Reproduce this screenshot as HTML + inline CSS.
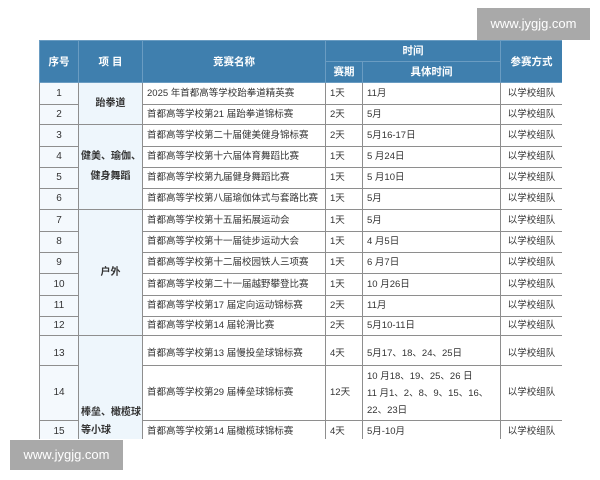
<!DOCTYPE html>
<html><head><meta charset="utf-8"><style>
body{margin:0;width:600px;height:480px;background:#fff;position:relative;overflow:hidden;font-family:"Liberation Sans","Noto Sans CJK SC",sans-serif;}
#w{position:absolute;left:39px;top:40px;width:523px;height:399px;overflow:hidden;}
table{border-collapse:collapse;table-layout:fixed;width:523px;font-size:9.5px;color:#333;}
td,th{border:1px solid #8e8e8e;padding:0 4px;white-space:nowrap;overflow:hidden;line-height:12px;}
th{background:#3f7fae;color:#fff;font-weight:bold;font-size:10.5px;border-color:#6a9cc2;text-align:center;}
td.n{text-align:center;background:#f4f9fd;font-size:10px;}
td.c{text-align:center;background:#eef6fc;font-weight:bold;font-size:10px;line-height:20px;padding:0 2px;}
td.t{text-align:center;}
.wm{position:absolute;background:#a9a9a9;color:#fff;font-size:13px;text-align:center;}
</style></head><body>
<div id="w"><table>
<colgroup><col style="width:39px"><col style="width:64px"><col style="width:183px"><col style="width:37px"><col style="width:138px"><col style="width:62px"></colgroup>
<tr style="height:21px"><th rowspan="2">序号</th><th rowspan="2">项 目</th><th rowspan="2">竞赛名称</th><th colspan="2">时间</th><th rowspan="2">参赛方式</th></tr>
<tr style="height:21px"><th>赛期</th><th>具体时间</th></tr>
<tr style="height:22px"><td class="n">1</td><td class="c" rowspan="2">跆拳道</td><td>2025 年首都高等学校跆拳道精英赛</td><td>1天</td><td>11月</td><td class="t">以学校组队</td></tr>
<tr style="height:20px"><td class="n">2</td><td>首都高等学校第21 届跆拳道锦标赛</td><td>2天</td><td>5月</td><td class="t">以学校组队</td></tr>
<tr style="height:22px"><td class="n">3</td><td class="c" rowspan="4">健美、瑜伽、<br>健身舞蹈</td><td>首都高等学校第二十届健美健身锦标赛</td><td>2天</td><td>5月16-17日</td><td class="t">以学校组队</td></tr>
<tr style="height:21px"><td class="n">4</td><td>首都高等学校第十六届体育舞蹈比赛</td><td>1天</td><td>5 月24日</td><td class="t">以学校组队</td></tr>
<tr style="height:21px"><td class="n">5</td><td>首都高等学校第九届健身舞蹈比赛</td><td>1天</td><td>5 月10日</td><td class="t">以学校组队</td></tr>
<tr style="height:21px"><td class="n">6</td><td>首都高等学校第八届瑜伽体式与套路比赛</td><td>1天</td><td>5月</td><td class="t">以学校组队</td></tr>
<tr style="height:22px"><td class="n">7</td><td class="c" rowspan="6">户外</td><td>首都高等学校第十五届拓展运动会</td><td>1天</td><td>5月</td><td class="t">以学校组队</td></tr>
<tr style="height:21px"><td class="n">8</td><td>首都高等学校第十一届徒步运动大会</td><td>1天</td><td>4 月5日</td><td class="t">以学校组队</td></tr>
<tr style="height:21px"><td class="n">9</td><td>首都高等学校第十二届校园铁人三项赛</td><td>1天</td><td>6 月7日</td><td class="t">以学校组队</td></tr>
<tr style="height:22px"><td class="n">10</td><td>首都高等学校第二十一届越野攀登比赛</td><td>1天</td><td>10 月26日</td><td class="t">以学校组队</td></tr>
<tr style="height:21px"><td class="n">11</td><td>首都高等学校第17 届定向运动锦标赛</td><td>2天</td><td>11月</td><td class="t">以学校组队</td></tr>
<tr style="height:19px"><td class="n">12</td><td>首都高等学校第14 届轮滑比赛</td><td>2天</td><td>5月10-11日</td><td class="t">以学校组队</td></tr>
<tr style="height:30px"><td class="n" style="padding-top:6px">13</td><td class="c" rowspan="3" style="text-align:left;vertical-align:top;padding-top:68px;line-height:18px">棒垒、橄榄球<br>等小球</td><td style="padding-top:6px">首都高等学校第13 届慢投垒球锦标赛</td><td style="padding-top:6px">4天</td><td style="padding-top:6px">5月17、18、24、25日</td><td class="t" style="padding-top:6px">以学校组队</td></tr>
<tr style="height:55px"><td class="n">14</td><td>首都高等学校第29 届棒垒球锦标赛</td><td>12天</td><td style="line-height:17px">10 月18、19、25、26 日<br>11 月1、2、8、9、15、16、<br>22、23日</td><td class="t">以学校组队</td></tr>
<tr style="height:22px"><td class="n">15</td><td>首都高等学校第14 届橄榄球锦标赛</td><td>4天</td><td>5月-10月</td><td class="t">以学校组队</td></tr>
</table></div>
<div class="wm" style="left:477px;top:8px;width:113px;height:32px;line-height:32px;">www.jygjg.com</div>
<div class="wm" style="left:10px;top:440px;width:113px;height:30px;line-height:30px;">www.jygjg.com</div>
</body></html>
